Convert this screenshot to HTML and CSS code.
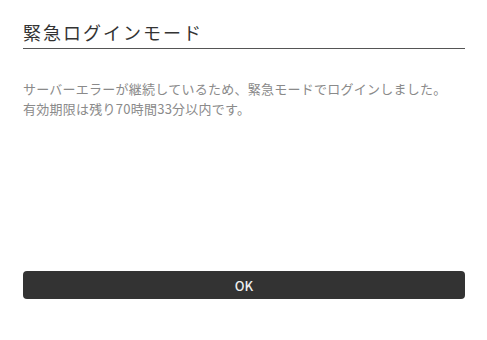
FILE: index.html
```html
<!DOCTYPE html>
<html lang="ja">
<head>
    <meta charset="UTF-8">
    <meta name="viewport" content="width=device-width, initial-scale=1.0">
    <title>緊急ログインモード</title>
    <link rel="stylesheet" href="styles.css">
</head>
<body>
    <div class="dialog">
        <h1 class="dialog-title">緊急ログインモード</h1>
        <div class="dialog-body">
            <p>サーバーエラーが継続しているため、緊急モードでログインしました。<br>有効期限は残り70時間33分以内です。</p>
        </div>
        <button class="dialog-ok" type="button">OK</button>
    </div>
</body>
</html>
```

FILE: styles.css
```css
/* Emergency login dialog */
body {
    margin: 0;
    background: #fff;
    font-family: "Noto Sans CJK JP", "Noto Sans", sans-serif;
}

.dialog {
    width: 442px;
    padding: 20px 22px 0 23px;
    display: flex;
    flex-direction: column;
}

.dialog-title {
    margin: 0;
    font-size: 18px;
    font-weight: 400;
    line-height: 24px;
    letter-spacing: 2px;
    color: #333;
    padding-bottom: 4px;
    border-bottom: 1px solid #555;
}

.dialog-body {
    height: 222px;
    padding-top: 30px;
    box-sizing: border-box;
}

.dialog-body p {
    margin: 0;
    font-size: 13px;
    line-height: 19.5px;
    letter-spacing: 0.25px;
    color: #8a8a8a;
}

.dialog-ok {
    height: 28px;
    border: none;
    border-radius: 4px;
    background: #333;
    color: #eee;
    font-family: "Noto Sans CJK JP", sans-serif;
    font-weight: 500;
    font-size: 13px;
    cursor: pointer;
}
```
